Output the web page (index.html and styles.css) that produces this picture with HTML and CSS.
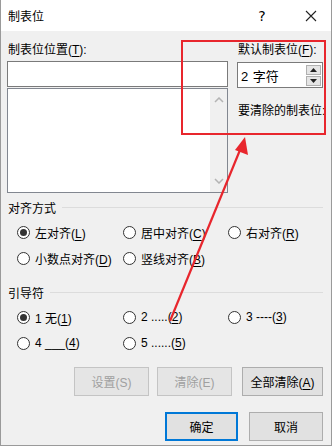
FILE: index.html
```html
<!DOCTYPE html>
<html lang="zh">
<head>
    <meta charset="UTF-8">
    <title>制表位</title>
    <link rel="stylesheet" href="styles.css">
</head>
<body>
    <div class="dialog">
        <div class="titlebar">
            <span class="title">制表位</span>
            <span class="help">?</span>
            <span class="close">
                <svg width="12" height="12" viewBox="0 0 12 12"><path d="M1 1L11 11M11 1L1 11" stroke="#222" stroke-width="1.1"/></svg>
            </span>
        </div>

        <div class="content">
            <div class="top">
                <div class="left-col">
                    <div class="label">制表位位置(<u>T</u>):</div>
                    <div class="textbox"></div>
                    <div class="listbox">
                        <div class="scrollbar">
                            <svg width="10" height="6" viewBox="0 0 10 6"><path d="M1 5L5 1L9 5" fill="none" stroke="#b4b4b4" stroke-width="1.5"/></svg>
                            <svg width="10" height="6" viewBox="0 0 10 6"><path d="M1 1L5 5L9 1" fill="none" stroke="#b4b4b4" stroke-width="1.5"/></svg>
                        </div>
                    </div>
                </div>
                <div class="right-col">
                    <div class="label">默认制表位(<u>F</u>):</div>
                    <div class="spinbox">
                        <span class="spin-value">2 字符</span>
                        <div class="spin-btns">
                            <div class="spin-btn"><svg width="7" height="4" viewBox="0 0 7 4"><path d="M0 4L3.5 0L7 4Z" fill="#222"/></svg></div>
                            <div class="spin-btn"><svg width="7" height="4" viewBox="0 0 7 4"><path d="M0 0L3.5 4L7 0Z" fill="#222"/></svg></div>
                        </div>
                    </div>
                    <div class="label clear-label">要清除的制表位:</div>
                </div>
            </div>

            <div class="group-title"><span>对齐方式</span><div class="rule"></div></div>
            <div class="radios">
                <label class="radio"><span class="dot checked"></span><span>左对齐(<u>L</u>)</span></label>
                <label class="radio"><span class="dot"></span><span>居中对齐(<u>C</u>)</span></label>
                <label class="radio"><span class="dot"></span><span>右对齐(<u>R</u>)</span></label>
                <label class="radio"><span class="dot"></span><span>小数点对齐(<u>D</u>)</span></label>
                <label class="radio"><span class="dot"></span><span>竖线对齐(<u>B</u>)</span></label>
            </div>

            <div class="group-title"><span>引导符</span><div class="rule"></div></div>
            <div class="radios">
                <label class="radio"><span class="dot checked"></span><span>1 无(<u>1</u>)</span></label>
                <label class="radio"><span class="dot"></span><span>2 .....(<u>2</u>)</span></label>
                <label class="radio"><span class="dot"></span><span>3 ----(<u>3</u>)</span></label>
                <label class="radio"><span class="dot"></span><span>4 ___(<u>4</u>)</span></label>
                <label class="radio"><span class="dot"></span><span>5 ......(<u>5</u>)</span></label>
            </div>

            <div class="btn-row">
                <button class="btn disabled">设置(S)</button>
                <button class="btn disabled">清除(E)</button>
                <button class="btn wide">全部清除(<u>A</u>)</button>
            </div>
            <div class="btn-row bottom">
                <button class="btn default">确定</button>
                <button class="btn">取消</button>
            </div>
        </div>

        <div class="highlight"></div>
        <svg class="arrow" width="332" height="446" viewBox="0 0 332 446">
            <line x1="170" y1="321" x2="240" y2="150" stroke="#e8262d" stroke-width="2.2"/>
            <path d="M245 137L248 155L235 150Z" fill="#e8262d"/>
        </svg>
    </div>
</body>
</html>
```

FILE: styles.css
```css
* {
    box-sizing: border-box;
}
body {
    margin: 0;
    font-family: "Liberation Sans", "Noto Sans CJK SC", sans-serif;
    font-size: 12px;
    color: #000;
}
u {
    text-decoration-thickness: 1px;
    text-underline-offset: 2px;
}
.dialog {
    position: relative;
    width: 332px;
    height: 446px;
    background: #f0f0f0;
    border: 1px solid #9a9a9a;
    border-top: none;
    overflow: hidden;
}
.titlebar {
    height: 31px;
    background: #fff;
    display: flex;
    align-items: center;
    padding-left: 7px;
}
.title {
    flex: 1;
    font-size: 12px;
}
.help {
    width: 20px;
    margin-right: 33px;
    text-align: center;
    font-size: 14px;
    font-family: "DejaVu Sans", sans-serif;
}
.close {
    width: 12px;
    margin-right: 14px;
    display: flex;
}
.content {
    padding: 11px 8px 0 6px;
}
.top {
    display: flex;
    gap: 9px;
}
.left-col {
    width: 223px;
}
.right-col {
    width: 86px;
}
.label {
    line-height: 16px;
    height: 16px;
    padding-left: 1px;
    white-space: nowrap;
}
.textbox {
    margin-top: 3px;
    height: 26px;
    background: #fff;
    border: 1px solid #7a7a7a;
}
.listbox {
    margin-top: 1px;
    height: 105px;
    background: #fff;
    border: 1px solid #828790;
    display: flex;
    justify-content: flex-end;
}
.scrollbar {
    width: 17px;
    background: #f0f0f0;
    display: flex;
    flex-direction: column;
    justify-content: space-between;
    align-items: center;
    padding: 8px 0 8px;
}
.spinbox {
    margin-top: 4px;
    height: 26px;
    background: #fff;
    border: 1px solid #7a7a7a;
    display: flex;
    align-items: center;
    justify-content: space-between;
    padding-left: 3px;
}
.spin-value {
    font-size: 13px;
    word-spacing: 1px;
}
.spin-btns {
    display: flex;
    flex-direction: column;
    gap: 1px;
    padding: 1px;
}
.spin-btn {
    width: 15px;
    height: 10px;
    background: #e5e5e5;
    border: 1px solid #b0b0b0;
    display: flex;
    align-items: center;
    justify-content: center;
}
.clear-label {
    margin-top: 15px;
}
.group-title {
    display: flex;
    align-items: center;
    gap: 6px;
    margin-top: 6px;
    height: 16px;
    padding-left: 1px;
}
.group-title .rule {
    flex: 1;
    height: 1px;
    background: #dcdcdc;
}
.radios {
    display: grid;
    grid-template-columns: 106px 105px auto;
    row-gap: 10px;
    padding: 9px 0 12px 10px;
}
.radio {
    display: flex;
    align-items: center;
    gap: 5px;
    height: 16px;
    white-space: nowrap;
}
.dot {
    width: 13px;
    height: 13px;
    border-radius: 50%;
    border: 1px solid #333;
    background: #fff;
    position: relative;
    flex: none;
}
.dot.checked::after {
    content: "";
    position: absolute;
    left: 2px;
    top: 2px;
    width: 7px;
    height: 7px;
    border-radius: 50%;
    background: #333;
}
.btn-row {
    display: flex;
    justify-content: flex-end;
    gap: 8px;
    margin-top: 4px;
}
.btn-row.bottom {
    margin-top: 16px;
    gap: 11px;
}
.btn {
    font-family: inherit;
    font-size: 12px;
    width: 74px;
    height: 29px;
    background: #e1e1e1;
    border: 1px solid #adadad;
    padding: 0;
    color: #000;
}
.btn.wide {
    width: 81px;
    margin-left: 2px;
}
.btn.disabled {
    background: #e5e5e5;
    border-color: #c4c4c4;
    color: #a0a0a0;
    width: 75px;
}
.btn.default {
    border: 2px solid #0078d7;
    width: 73px;
}
.highlight {
    position: absolute;
    left: 180px;
    top: 40px;
    width: 145px;
    height: 95px;
    border: 2px solid #e8262d;
}
.arrow {
    position: absolute;
    left: -1px;
    top: 0;
    pointer-events: none;
}
```
